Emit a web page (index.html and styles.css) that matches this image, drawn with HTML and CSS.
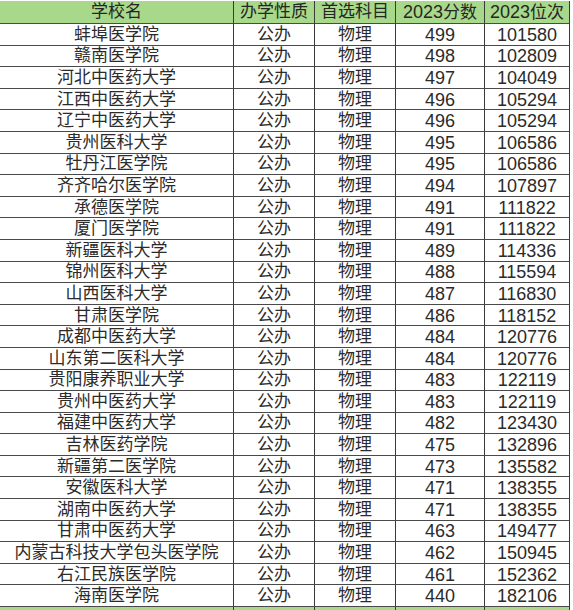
FILE: index.html
```html
<!DOCTYPE html>
<html lang="zh-CN">
<head>
<meta charset="utf-8">
<title>2023 医学院校分数</title>
<link rel="stylesheet" href="styles.css">
</head>
<body>
<table class="score-table">
  <colgroup>
    <col class="c-name"><col class="c-type"><col class="c-subj"><col class="c-score"><col class="c-rank">
  </colgroup>
  <thead>
    <tr class="head">
      <th>学校名</th><th>办学性质</th><th>首选科目</th><th><span class="num">2023</span>分数</th><th><span class="num">2023</span>位次</th>
    </tr>
  </thead>
  <tbody>
    <tr><td>蚌埠医学院</td><td>公办</td><td>物理</td><td class="num">499</td><td class="num">101580</td></tr>
    <tr><td>赣南医学院</td><td>公办</td><td>物理</td><td class="num">498</td><td class="num">102809</td></tr>
    <tr><td>河北中医药大学</td><td>公办</td><td>物理</td><td class="num">497</td><td class="num">104049</td></tr>
    <tr><td>江西中医药大学</td><td>公办</td><td>物理</td><td class="num">496</td><td class="num">105294</td></tr>
    <tr><td>辽宁中医药大学</td><td>公办</td><td>物理</td><td class="num">496</td><td class="num">105294</td></tr>
    <tr><td>贵州医科大学</td><td>公办</td><td>物理</td><td class="num">495</td><td class="num">106586</td></tr>
    <tr><td>牡丹江医学院</td><td>公办</td><td>物理</td><td class="num">495</td><td class="num">106586</td></tr>
    <tr><td>齐齐哈尔医学院</td><td>公办</td><td>物理</td><td class="num">494</td><td class="num">107897</td></tr>
    <tr><td>承德医学院</td><td>公办</td><td>物理</td><td class="num">491</td><td class="num">111822</td></tr>
    <tr><td>厦门医学院</td><td>公办</td><td>物理</td><td class="num">491</td><td class="num">111822</td></tr>
    <tr><td>新疆医科大学</td><td>公办</td><td>物理</td><td class="num">489</td><td class="num">114336</td></tr>
    <tr><td>锦州医科大学</td><td>公办</td><td>物理</td><td class="num">488</td><td class="num">115594</td></tr>
    <tr><td>山西医科大学</td><td>公办</td><td>物理</td><td class="num">487</td><td class="num">116830</td></tr>
    <tr><td>甘肃医学院</td><td>公办</td><td>物理</td><td class="num">486</td><td class="num">118152</td></tr>
    <tr><td>成都中医药大学</td><td>公办</td><td>物理</td><td class="num">484</td><td class="num">120776</td></tr>
    <tr><td>山东第二医科大学</td><td>公办</td><td>物理</td><td class="num">484</td><td class="num">120776</td></tr>
    <tr><td>贵阳康养职业大学</td><td>公办</td><td>物理</td><td class="num">483</td><td class="num">122119</td></tr>
    <tr><td>贵州中医药大学</td><td>公办</td><td>物理</td><td class="num">483</td><td class="num">122119</td></tr>
    <tr><td>福建中医药大学</td><td>公办</td><td>物理</td><td class="num">482</td><td class="num">123430</td></tr>
    <tr><td>吉林医药学院</td><td>公办</td><td>物理</td><td class="num">475</td><td class="num">132896</td></tr>
    <tr><td>新疆第二医学院</td><td>公办</td><td>物理</td><td class="num">473</td><td class="num">135582</td></tr>
    <tr><td>安徽医科大学</td><td>公办</td><td>物理</td><td class="num">471</td><td class="num">138355</td></tr>
    <tr><td>湖南中医药大学</td><td>公办</td><td>物理</td><td class="num">471</td><td class="num">138355</td></tr>
    <tr><td>甘肃中医药大学</td><td>公办</td><td>物理</td><td class="num">463</td><td class="num">149477</td></tr>
    <tr><td>内蒙古科技大学包头医学院</td><td>公办</td><td>物理</td><td class="num">462</td><td class="num">150945</td></tr>
    <tr><td>右江民族医学院</td><td>公办</td><td>物理</td><td class="num">461</td><td class="num">152362</td></tr>
    <tr><td>海南医学院</td><td>公办</td><td>物理</td><td class="num">440</td><td class="num">182106</td></tr>
    <tr class="head tail"><td></td><td></td><td></td><td></td><td></td></tr>
  </tbody>
</table>
</body>
</html>
```

FILE: styles.css
```css
html, body {
  margin: 0;
  padding: 0;
  background: #ffffff;
  overflow: hidden;
}

.score-table {
  margin-top: 1px;
  width: 570px;
  table-layout: fixed;
  border-collapse: separate;
  border-spacing: 0;
  font-family: "Liberation Sans", "Noto Sans CJK SC", sans-serif;
  font-size: 17px;
  color: #2b2b2b;
}

.c-name { width: 234px; }
.c-type { width: 81px; }
.c-subj { width: 81px; }
.c-score { width: 89px; }
.c-rank { width: 85px; }

.score-table th,
.score-table td {
  box-sizing: border-box;
  padding: 1px 0 0 0;
  text-align: center;
  vertical-align: middle;
  font-weight: normal;
  line-height: 18px;
  white-space: nowrap;
  border-right: 1px solid #3a3a3a;
  border-bottom: 1px solid #4a4a4a;
  height: 21.6px;
}

.score-table th {
  height: 23px;
  padding-top: 0;
}

.head th,
.head td {
  background: #a8d98b;
  color: #262626;
}

.num {
  font-size: 18px;
}
```
